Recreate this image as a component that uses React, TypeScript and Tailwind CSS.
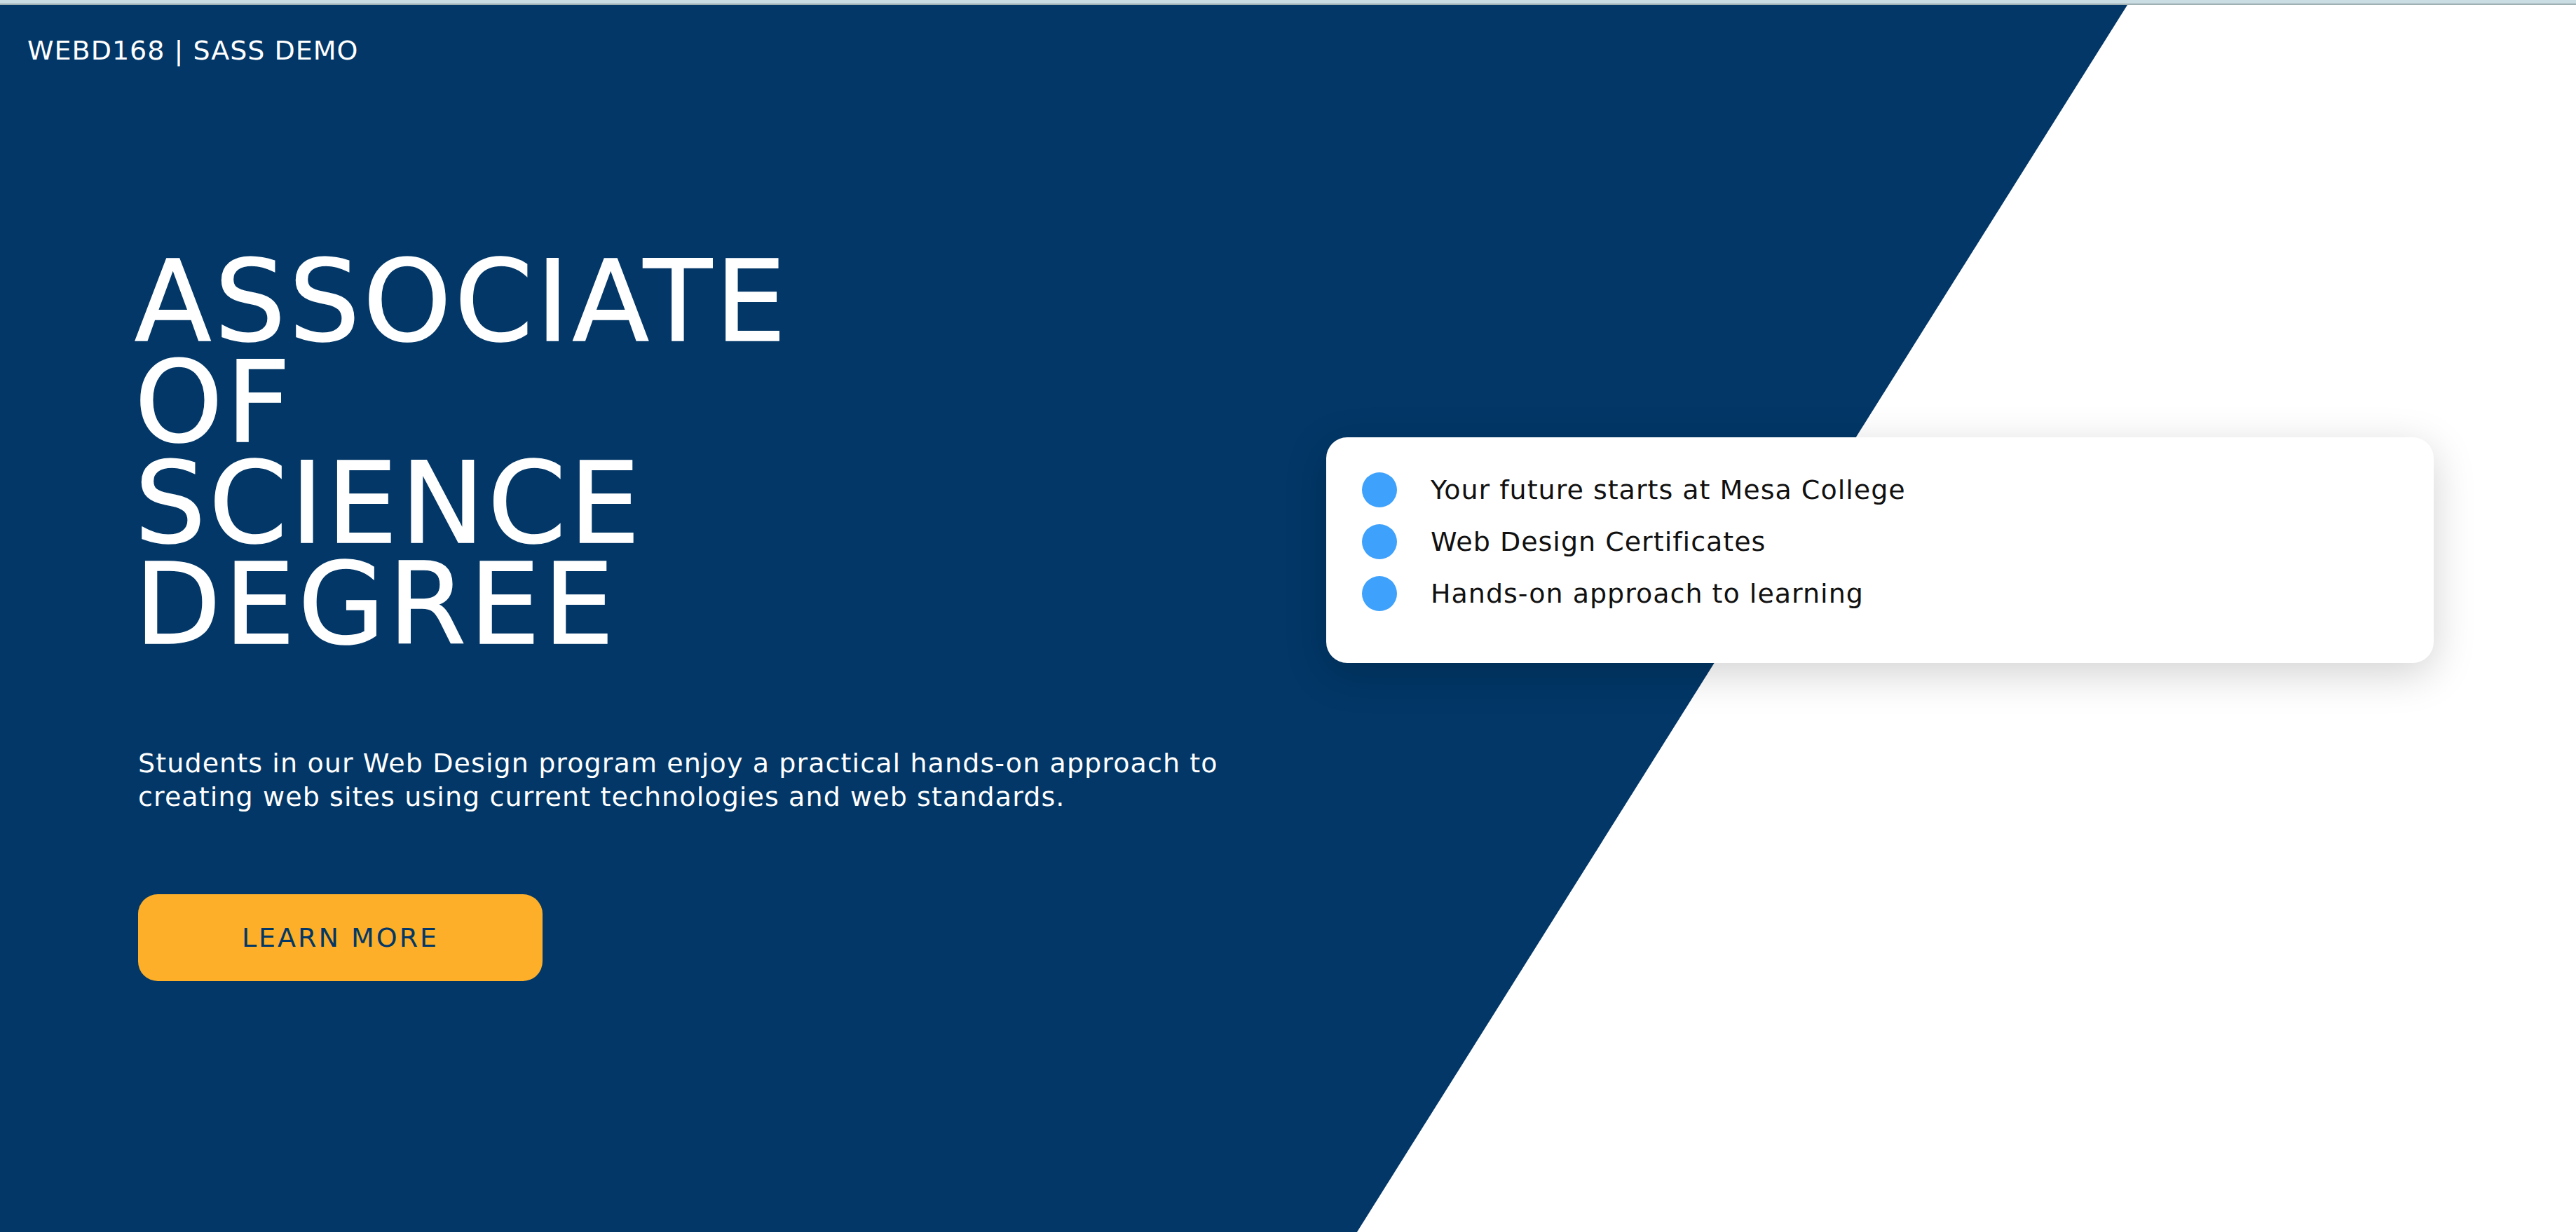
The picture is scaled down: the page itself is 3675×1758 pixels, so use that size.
import React from "react";

const items = [
  "Your future starts at Mesa College",
  "Web Design Certificates",
  "Hands-on approach to learning",
];

export default function App() {
  return (
    <div className="w-full min-h-screen bg-white font-['DejaVu_Sans',sans-serif]">
      <div className="h-[7px] bg-[#c9dde3] border-b-2 border-[#a0b1b4]" />
      <main className="relative h-[1751px] overflow-hidden bg-white">
        <div className="absolute inset-0 bg-[#023767] [clip-path:polygon(0_0,3035px_0,1936px_100%,0_100%)]" />
        <div className="relative flex flex-col">
          <header className="pt-[46px] pl-[39px] text-[38px] leading-none tracking-[1px] text-white">
            WEBD168 | SASS DEMO
          </header>
          <div className="mt-[268px] flex items-start">
            <div className="w-[1892px] shrink-0 pl-[197px]">
              <h1 className="-ml-[5px] text-[160px] leading-[144px] tracking-[4.5px] text-white [-webkit-text-stroke:1.5px_white]">
                ASSOCIATE
                <br />
                OF
                <br />
                SCIENCE
                <br />
                DEGREE
              </h1>
              <p className="mt-[130px] whitespace-nowrap text-[38px] leading-[48px] tracking-[1.1px] text-white">
                Students in our Web Design program enjoy a practical hands-on approach to
                <br />
                creating web sites using current technologies and web standards.
              </p>
              <button className="mt-[115px] flex h-[124px] w-[577px] items-center justify-center rounded-[28px] bg-[#fdaf29] text-[38px] leading-none tracking-[3px] text-[#023767]">
                LEARN MORE
              </button>
            </div>
            <div className="mt-[265px] w-[1580px] shrink-0 rounded-[30px] bg-white pl-[51px] pt-[38px] pb-[62px] shadow-[0_15px_60px_rgba(0,0,0,0.18)]">
              <ul className="flex flex-col">
                {items.map((t) => (
                  <li key={t} className="flex h-[74px] items-center gap-[48px]">
                    <span className="h-[50px] w-[50px] shrink-0 rounded-full bg-[#3ea1fb]" />
                    <span className="whitespace-nowrap text-[38px] leading-none tracking-[1px] text-[#111111]">{t}</span>
                  </li>
                ))}
              </ul>
            </div>
          </div>
        </div>
      </main>
    </div>
  );
}
